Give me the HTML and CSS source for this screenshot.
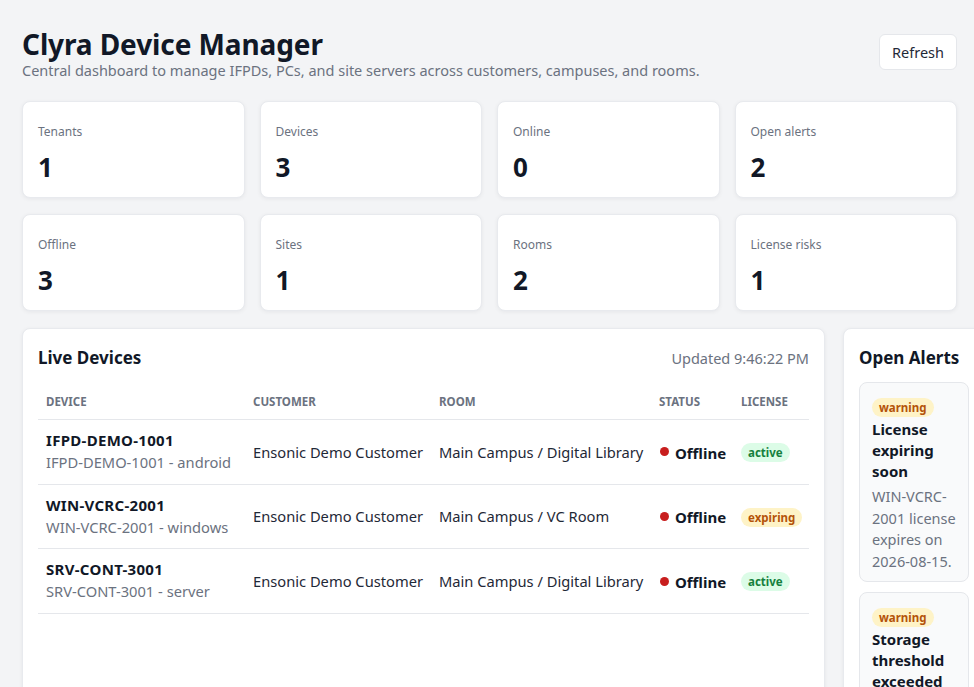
FILE: index.html
```html
<!DOCTYPE html>
<html lang="en">
<head>
  <meta charset="UTF-8">
  <meta name="viewport" content="width=device-width, initial-scale=1">
  <title>Clyra Device Manager</title>
  <link rel="stylesheet" href="styles.css">
</head>
<body>
  <div class="page">
    <header class="top">
      <div>
        <h1>Clyra Device Manager</h1>
        <p class="sub">Central dashboard to manage IFPDs, PCs, and site servers across customers, campuses, and rooms.</p>
      </div>
      <button class="refresh">Refresh</button>
    </header>

    <section class="stats">
      <div class="stat"><div class="stat-label">Tenants</div><div class="stat-value">1</div></div>
      <div class="stat"><div class="stat-label">Devices</div><div class="stat-value">3</div></div>
      <div class="stat"><div class="stat-label">Online</div><div class="stat-value">0</div></div>
      <div class="stat"><div class="stat-label">Open alerts</div><div class="stat-value">2</div></div>
      <div class="stat"><div class="stat-label">Offline</div><div class="stat-value">3</div></div>
      <div class="stat"><div class="stat-label">Sites</div><div class="stat-value">1</div></div>
      <div class="stat"><div class="stat-label">Rooms</div><div class="stat-value">2</div></div>
      <div class="stat"><div class="stat-label">License risks</div><div class="stat-value">1</div></div>
    </section>

    <section class="main">
      <div class="panel devices">
        <div class="panel-head">
          <h2>Live Devices</h2>
          <span class="updated">Updated 9:46:22 PM</span>
        </div>
        <table>
          <thead>
            <tr>
              <th class="c-device">Device</th>
              <th class="c-customer">Customer</th>
              <th class="c-room">Room</th>
              <th class="c-status">Status</th>
              <th>License</th>
            </tr>
          </thead>
          <tbody>
            <tr>
              <td><div class="dev-name">IFPD-DEMO-1001</div><div class="dev-sub">IFPD-DEMO-1001 - android</div></td>
              <td>Ensonic Demo Customer</td>
              <td>Main Campus / Digital Library</td>
              <td><span class="status"><span class="dot"></span>Offline</span></td>
              <td><span class="badge ok">active</span></td>
            </tr>
            <tr>
              <td><div class="dev-name">WIN-VCRC-2001</div><div class="dev-sub">WIN-VCRC-2001 - windows</div></td>
              <td>Ensonic Demo Customer</td>
              <td>Main Campus / VC Room</td>
              <td><span class="status"><span class="dot"></span>Offline</span></td>
              <td><span class="badge warn">expiring</span></td>
            </tr>
            <tr>
              <td><div class="dev-name">SRV-CONT-3001</div><div class="dev-sub">SRV-CONT-3001 - server</div></td>
              <td>Ensonic Demo Customer</td>
              <td>Main Campus / Digital Library</td>
              <td><span class="status"><span class="dot"></span>Offline</span></td>
              <td><span class="badge ok">active</span></td>
            </tr>
          </tbody>
        </table>
      </div>

      <div class="panel alerts">
        <h2>Open Alerts</h2>
        <div class="alert">
          <span class="badge warn">warning</span>
          <div class="alert-title">License expiring soon</div>
          <div class="alert-text">WIN-VCRC-2001 license expires on 2026-08-15.</div>
        </div>
        <div class="alert">
          <span class="badge warn">warning</span>
          <div class="alert-title">Storage threshold exceeded</div>
          <div class="alert-text">SRV-CONT-3001 storage usage is above 85%.</div>
        </div>
      </div>
    </section>
  </div>
</body>
</html>
```

FILE: styles.css
```css
* { box-sizing: border-box; }

body {
  margin: 0;
  background: #f3f4f6;
  color: #111827;
  font-family: 'Noto Sans', 'Open Sans', sans-serif;
  overflow-x: hidden;
}

.page {
  padding: 28px 17px 24px 22px;
  width: 974px;
}

.top {
  display: flex;
  justify-content: space-between;
  align-items: flex-start;
}

h1 {
  margin: 0;
  font-size: 28px;
  line-height: 32px;
  font-weight: 700;
  letter-spacing: -0.1px;
}

.sub {
  margin: 0;
  font-size: 14.5px;
  color: #6b7280;
}

.refresh {
  margin-top: 6px;
  background: #fff;
  border: 1px solid #e5e7eb;
  border-radius: 6px;
  padding: 7px 12px;
  font-family: inherit;
  font-size: 14.5px;
  color: #1f2937;
}

.stats {
  margin-top: 21px;
  display: grid;
  grid-template-columns: repeat(4, 1fr);
  gap: 16px 15px;
}

.stat {
  background: #fff;
  border-radius: 8px;
  border: 1px solid #e8eaee;
  box-shadow: 0 1px 4px rgba(15, 23, 42, 0.06);
  height: 97px;
  padding: 21px 15px 0;
}

.stat-label {
  font-size: 12px;
  color: #6b7280;
}

.stat-value {
  margin-top: 12px;
  font-size: 26px;
  font-weight: 700;
  line-height: 30px;
}

.main {
  margin-top: 17px;
  display: grid;
  grid-template-columns: 803px 142px;
  gap: 18px;
  align-items: start;
}

.panel {
  background: #fff;
  border-radius: 8px;
  border: 1px solid #e8eaee;
  box-shadow: 0 1px 4px rgba(15, 23, 42, 0.06);
  padding: 17px 15px 16px;
  min-height: 380px;
}

.panel-head {
  display: flex;
  justify-content: space-between;
  align-items: center;
}

h2 {
  margin: 0;
  font-size: 17px;
  font-weight: 700;
  line-height: 24px;
}

.updated {
  font-size: 14.5px;
  color: #6b7280;
}

table {
  width: 100%;
  table-layout: fixed;
  border-collapse: collapse;
  margin-top: 18px;
}

th {
  text-align: left;
  font-size: 11.5px;
  font-weight: 700;
  color: #6b7280;
  text-transform: uppercase;
  padding: 6px 8px 10px;
  border-bottom: 1px solid #e5e7eb;
}

td {
  padding: 10px 8px 10.7px;
  font-size: 14.7px;
  border-bottom: 1px solid #e5e7eb;
  vertical-align: middle;
  white-space: nowrap;
  color: #1f2937;
}

.c-device { width: 207px; }
.c-customer { width: 186px; }
.c-room { width: 220px; }
.c-status { width: 82px; }

.dev-name {
  font-weight: 700;
  font-size: 15px;
  color: #111827;
  line-height: 21px;
  letter-spacing: 0.3px;
}

.dev-sub {
  color: #6b7280;
  line-height: 22px;
}

.status {
  display: inline-flex;
  align-items: center;
  gap: 6px;
  font-weight: 700;
  font-size: 15px;
  color: #111827;
  margin-left: 1px;
}

.dot {
  width: 9px;
  height: 9px;
  border-radius: 50%;
  background: #c81e1e;
  margin-top: -2px;
}

.badge {
  display: inline-block;
  padding: 2px 7px;
  border-radius: 999px;
  font-size: 11.5px;
  font-weight: 700;
  line-height: 15px;
}

.badge.ok { background: #dcfce7; color: #15803d; }
.badge.warn { background: #fef3c7; color: #b45309; }

.alerts h2 { margin-bottom: 12px; }

.alert {
  background: #f9fafb;
  border: 1px solid #e5e7eb;
  border-radius: 8px;
  padding: 12px 11px 9px 12px;
  margin-bottom: 10px;
}

.alert-title {
  margin-top: 2px;
  font-size: 15px;
  font-weight: 700;
  line-height: 21px;
}

.alert-text {
  margin-top: 4px;
  font-size: 14.5px;
  color: #6b7280;
  line-height: 21.5px;
}
```
